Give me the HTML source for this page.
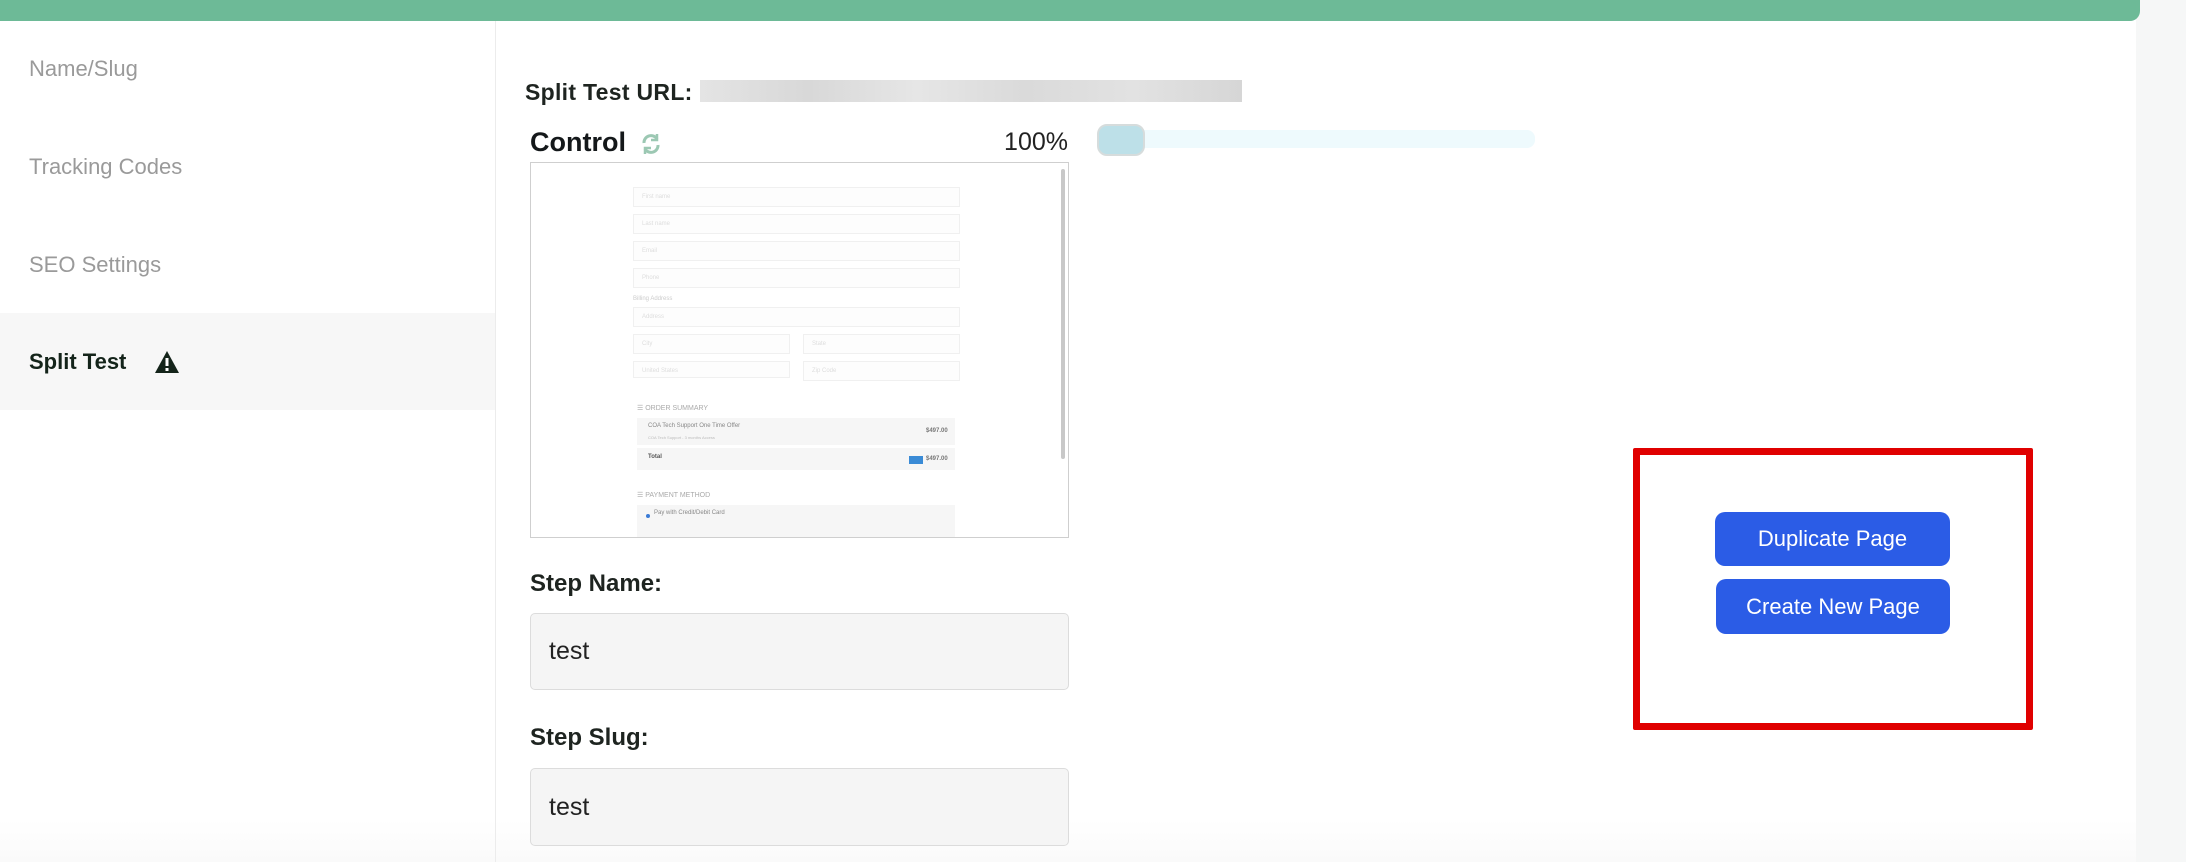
<!DOCTYPE html>
<html><head><meta charset="utf-8"><style>
*{box-sizing:border-box;margin:0;padding:0}
body{width:2186px;height:862px;position:relative;overflow:hidden;background:#fff;font-family:"Liberation Sans",sans-serif}
.a{position:absolute}
.nav{left:29px;font-size:22px;color:#9a9a9a}
.fi{position:absolute;border:1px solid #f0f0f0;background:#fdfdfd;height:20px;font-size:6px;color:#ddd;padding:6px 8px}
.lbl{left:530px;font-size:24px;font-weight:bold;color:#1e2420}
.inp{left:530px;width:539px;background:#f5f5f5;border:1px solid #dcdcdc;border-radius:5px;font-size:25px;color:#222;padding-left:18px;display:flex;align-items:center}
.btn{background:#2b5ce6;color:#fff;border-radius:10px;font-size:22px;display:flex;align-items:center;justify-content:center}
</style></head><body>
<div class="a" style="left:2136px;top:0;width:50px;height:862px;background:#f6f7f7"></div>
<div class="a" style="left:0;top:0;width:2140px;height:21px;background:#6dba97;border-bottom-right-radius:10px"></div>
<div class="a" style="left:0;top:820px;width:2136px;height:42px;background:linear-gradient(#fff,#fafafa)"></div>
<div class="a" style="left:495px;top:21px;width:1px;height:841px;background:#ececec"></div>
<div class="a nav" style="top:56px">Name/Slug</div>
<div class="a nav" style="top:154px">Tracking Codes</div>
<div class="a nav" style="top:252px">SEO Settings</div>
<div class="a" style="left:0;top:313px;width:495px;height:97px;background:#f7f7f7"></div>
<div class="a" style="left:29px;top:349px;font-size:22px;font-weight:bold;color:#14241a">Split Test</div>
<svg class="a" style="left:154px;top:350px" width="26" height="24" viewBox="0 0 26 24"><path d="M13 1 L25 23 H1 Z" fill="#14241a"/><rect x="11.5" y="8" width="3" height="8" fill="#fff"/><rect x="11.5" y="18" width="3" height="3" fill="#fff"/></svg>

<div class="a" style="left:525px;top:79px;font-size:23px;font-weight:bold;color:#1e2420;letter-spacing:0.3px">Split Test URL:</div>
<div class="a" style="left:700px;top:80px;width:542px;height:22px;background:linear-gradient(90deg,#e4e4e4,#d8d8d8 20%,#e6e6e6 40%,#dadada 60%,#e2e2e2 80%,#d6d6d6)"></div>

<div class="a" style="left:530px;top:127px;font-size:27px;font-weight:bold;color:#14181a">Control</div>
<svg class="a" style="left:640px;top:132px" width="22" height="24" viewBox="0 0 22 24" fill="none" stroke="#9cc8b3" stroke-width="3"><path d="M4 11a7 7 0 0 1 13-4"/><path d="M18 13a7 7 0 0 1-13 4"/><path d="M17 2v6h-6" stroke-width="2.5"/><path d="M5 22v-6h6" stroke-width="2.5"/></svg>
<div class="a" style="left:1000px;top:128px;width:68px;text-align:right;font-size:25px;color:#222">100%</div>
<div class="a" style="left:1100px;top:130px;width:435px;height:18px;background:#eefafd;border-radius:8px"></div>
<div class="a" style="left:1097px;top:124px;width:48px;height:32px;background:#bde0e8;border:2px solid #d6dcdc;border-radius:10px"></div>

<div class="a" style="left:530px;top:162px;width:539px;height:376px;border:1px solid #cfcfcf;background:#fff;overflow:hidden">
 <div class="a" style="right:3px;top:6px;width:4px;height:290px;background:#c8c8c8;border-radius:2px"></div>
</div>
<div class="fi" style="left:633px;top:187px;width:327px">First name</div>
<div class="fi" style="left:633px;top:214px;width:327px">Last name</div>
<div class="fi" style="left:633px;top:241px;width:327px">Email</div>
<div class="fi" style="left:633px;top:268px;width:327px">Phone</div>
<div class="a" style="left:633px;top:296px;font-size:6px;color:#ccc">Billing Address</div>
<div class="fi" style="left:633px;top:307px;width:327px">Address</div>
<div class="fi" style="left:633px;top:334px;width:157px">City</div>
<div class="fi" style="left:803px;top:334px;width:157px">State</div>
<div class="fi" style="left:633px;top:361px;width:157px;height:17px">United States</div>
<div class="fi" style="left:803px;top:361px;width:157px">Zip Code</div>
<div class="a" style="left:637px;top:404px;font-size:7px;color:#aaa">☰ ORDER SUMMARY</div>
<div class="a" style="left:637px;top:418px;width:318px;height:27px;background:#f6f6f6"></div>
<div class="a" style="left:648px;top:423px;font-size:6px;color:#888">COA Tech Support One Time Offer</div>
<div class="a" style="left:648px;top:435px;font-size:4px;color:#bbb">COA Tech Support - 3 months Access</div>
<div class="a" style="left:926px;top:428px;font-size:6px;font-weight:bold;color:#777">$497.00</div>
<div class="a" style="left:637px;top:448px;width:318px;height:22px;background:#f6f6f6"></div>
<div class="a" style="left:648px;top:454px;font-size:6px;font-weight:bold;color:#555">Total</div>
<div class="a" style="left:909px;top:456px;width:14px;height:8px;background:#3a8bd6"></div>
<div class="a" style="left:926px;top:456px;font-size:6px;font-weight:bold;color:#777">$497.00</div>
<div class="a" style="left:637px;top:491px;font-size:7px;color:#aaa">☰ PAYMENT METHOD</div>
<div class="a" style="left:637px;top:505px;width:318px;height:32px;background:#f6f6f6"></div>
<div class="a" style="left:646px;top:514px;width:4px;height:4px;border-radius:50%;background:#3a7bd6"></div>
<div class="a" style="left:654px;top:510px;font-size:6px;color:#888">Pay with Credit/Debit Card</div>

<div class="a lbl" style="top:570px">Step Name:</div>
<div class="a inp" style="top:613px;height:77px">test</div>
<div class="a lbl" style="top:724px">Step Slug:</div>
<div class="a inp" style="top:768px;height:78px">test</div>

<div class="a" style="left:1633px;top:448px;width:400px;height:282px;border:7px solid #e00000;border-radius:2px"></div>
<div class="a btn" style="left:1715px;top:512px;width:235px;height:54px">Duplicate Page</div>
<div class="a btn" style="left:1716px;top:579px;width:234px;height:55px">Create New Page</div>
</body></html>
